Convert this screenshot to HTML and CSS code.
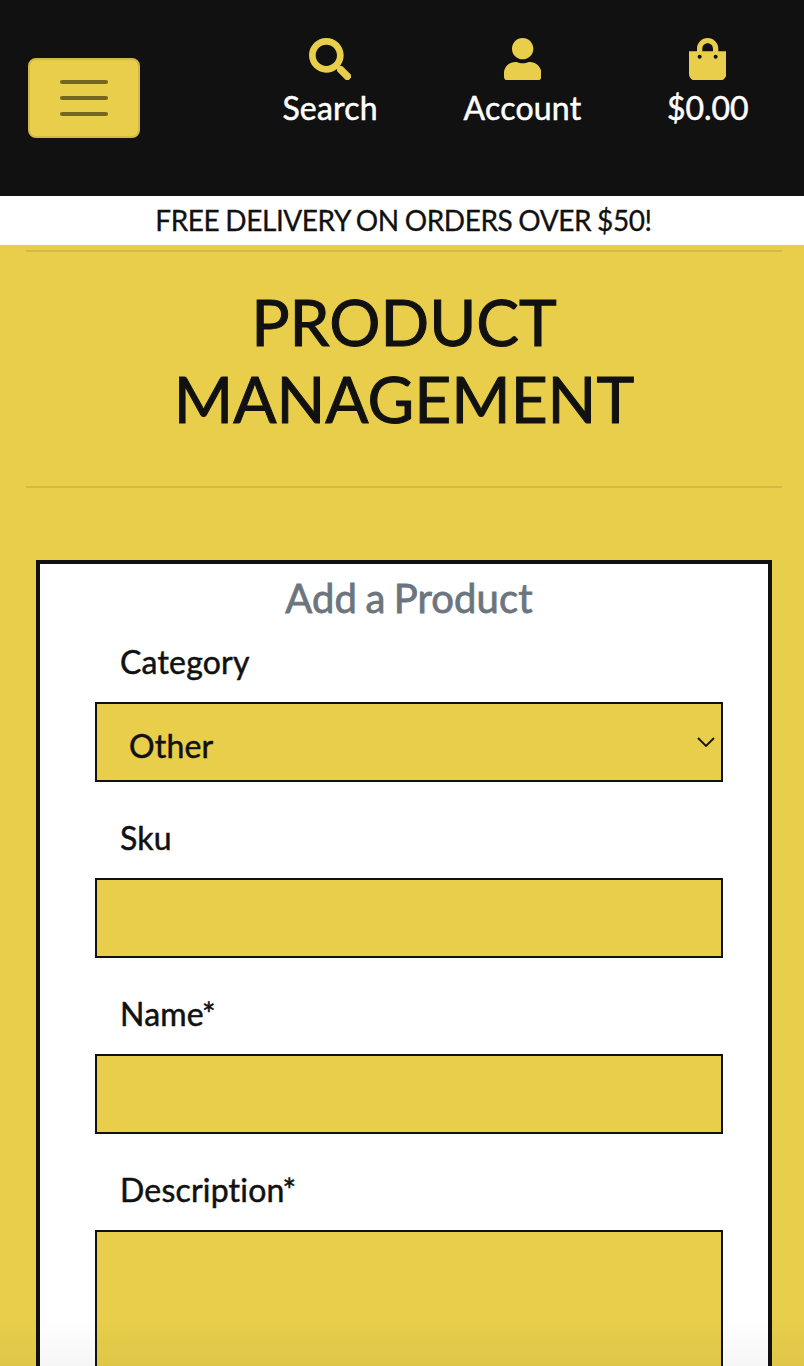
FILE: index.html
```html
<!DOCTYPE html>
<html lang="en">
<head>
<meta charset="utf-8">
<title>Product Management</title>
<link rel="stylesheet" href="styles.css">
</head>
<body>
<header class="site-header">
  <button class="menu-toggle" type="button" aria-label="Toggle navigation">
    <svg class="menu-icon" viewBox="0 0 60 60" width="60" height="60"><path d="M8 14h44M8 30h44M8 46h44" stroke="currentColor" stroke-width="4" stroke-linecap="round" fill="none"/></svg>
  </button>
  <nav class="header-nav">
    <a class="nav-item">
      <svg class="nav-icon" viewBox="0 0 512 512"><path d="M505 442.7L405.3 343c-4.5-4.5-10.6-7-17-7H372c27.6-35.3 44-79.7 44-128C416 93.1 322.9 0 208 0S0 93.1 0 208s93.1 208 208 208c48.3 0 92.7-16.4 128-44v16.3c0 6.4 2.5 12.5 7 17l99.7 99.7c9.4 9.4 24.6 9.4 33.9 0l28.3-28.3c9.4-9.4 9.4-24.6.1-34zM208 336c-70.7 0-128-57.2-128-128 0-70.7 57.2-128 128-128 70.7 0 128 57.2 128 128 0 70.7-57.2 128-128 128z"/></svg>
      <span>Search</span>
    </a>
    <a class="nav-item">
      <svg class="nav-icon" viewBox="0 0 448 512"><path d="M224 256c70.7 0 128-57.3 128-128S294.7 0 224 0 96 57.3 96 128s57.3 128 128 128zm89.6 32h-16.7c-22.2 10.2-46.9 16-72.9 16s-50.6-5.8-72.9-16h-16.7C60.2 288 0 348.2 0 422.4V464c0 26.5 21.5 48 48 48h352c26.5 0 48-21.5 48-48v-41.6c0-74.2-60.2-134.4-134.4-134.4z"/></svg>
      <span>Account</span>
    </a>
    <a class="nav-item nav-total">
      <svg class="nav-icon" viewBox="0 0 448 512"><path d="M352 160v-32C352 57.42 294.579 0 224 0 153.42 0 96 57.42 96 128v32H0v272c0 44.183 35.817 80 80 80h288c44.183 0 80-35.817 80-80V160h-96zm-192-32c0-35.29 28.71-64 64-64s64 28.71 64 64v32H160v-32zm160 120c-13.255 0-24-10.745-24-24s10.745-24 24-24 24 10.745 24 24-10.745 24-24 24zm-192 0c-13.255 0-24-10.745-24-24s10.745-24 24-24 24 10.745 24 24-10.745 24-24 24z"/></svg>
      <span>$0.00</span>
    </a>
  </nav>
</header>
<div class="delivery-banner">FREE DELIVERY ON ORDERS OVER $50!</div>
<main class="page">
  <h1 class="page-title">PRODUCT<br>MANAGEMENT</h1>
  <form class="product-form">
    <h2 class="form-title">Add a Product</h2>
    <div class="field">
      <label class="field-label">Category</label>
      <div class="control select"><span>Other</span>
        <svg class="chevron" viewBox="0 0 18 10" width="18" height="10"><path d="M1 1l8 8 8-8" fill="none" stroke="#111" stroke-width="1.8"/></svg>
      </div>
    </div>
    <div class="field">
      <label class="field-label" for="sku">Sku</label>
      <input class="control" id="sku" type="text">
    </div>
    <div class="field">
      <label class="field-label" for="name">Name<span class="required">*</span></label>
      <input class="control" id="name" type="text">
    </div>
    <div class="field">
      <label class="field-label" for="description">Description<span class="required">*</span></label>
      <textarea class="control description" id="description"></textarea>
    </div>
  </form>
</main>
<div class="bottom-shade"></div>
</body>
</html>
```
FILE: styles.css
```css
* { box-sizing: border-box; }
body {
  margin: 0;
  height: 1366px;
  overflow: hidden;
  background: #e8ce4b;
  color: #111;
  font: 400 32px/48px Lato, sans-serif;
  font-variant-ligatures: none;
  -webkit-text-stroke: 0.5px currentColor;
}
.site-header {
  display: flex;
  justify-content: space-between;
  align-items: flex-start;
  height: 196px;
  padding: 37.67px 55.6px 0 28px;
  background: #111;
}
.menu-toggle {
  display: flex;
  align-items: center;
  justify-content: center;
  width: 112px;
  height: 80px;
  margin: 20.33px 0 0;
  padding: 0;
  border: 2px solid #d2ba45;
  border-radius: 8px;
  background: #e8ce4b;
  color: #746726;
}
.menu-icon { display: block; }
.header-nav { display: flex; gap: 85.8px; color: #fff; letter-spacing: 0.2px; }
.nav-total { letter-spacing: -0.1px; }
.nav-item {
  display: flex;
  flex-direction: column;
  align-items: center;
  gap: 4px;
}
.nav-icon { display: block; height: 42.67px; fill: #e8ce4b; }
.delivery-banner {
  height: 49px;
  padding: 3px 0 0 3px;
  background: #fff;
  font-size: 28px;
  line-height: 42px;
  text-align: center;
  letter-spacing: -0.42px;
  word-spacing: -0.8px;
  -webkit-text-stroke-width: 0.3px;
}
.page { padding: 5px 22px 0 26px; }
.page-title {
  height: 238px;
  margin: 0;
  padding-top: 32px;
  border-top: 2px solid #d2ba45;
  border-bottom: 2px solid #d2ba45;
  font-size: 64px;
  font-weight: 400;
  line-height: 76.8px;
  text-align: center;
  -webkit-text-stroke-width: 1px;
}
.product-form {
  height: 806px;
  margin: 72px 10px 0;
  padding: 10px 45px 0 55px;
  border: 4px solid #111;
  border-bottom: 0;
  background: #fff;
  overflow: hidden;
}
.form-title {
  margin: 0 0 16px;
  color: #6c757d;
  font-size: 40px;
  font-weight: 400;
  line-height: 48px;
  text-align: center;
  letter-spacing: 0.1px;
  word-spacing: -2px;
  -webkit-text-stroke-width: 0.8px;
}
.field { margin-bottom: 32px; }
.field-label { display: block; margin: 0 0 16px 25px; letter-spacing: 0.2px; }
.required { margin-left: -2px; }
.control {
  display: block;
  width: 100%;
  height: 80px;
  margin: 0;
  border: 2px solid #111;
  border-radius: 0;
  background: #e8ce4b;
  color: #111;
  font: inherit;
}
.select {
  display: flex;
  justify-content: space-between;
  align-items: flex-start;
  padding: 18px 6px 0 32px;
  letter-spacing: 0.2px;
}
.chevron { margin-top: 15px; }
.description { height: 136px; border-bottom: 0; resize: none; }
.bottom-shade {
  position: fixed;
  inset: auto 0 0;
  height: 50px;
  background: linear-gradient(transparent, rgba(0, 0, 0, 0.035));
}
```
